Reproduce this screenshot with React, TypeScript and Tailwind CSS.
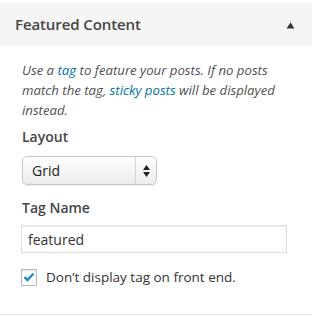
import React from "react";

export default function App() {
  return (
    <div
      className="w-[312px] h-[316px] bg-white overflow-hidden"
      style={{ fontFamily: '"Open Sans", "Liberation Sans", sans-serif' }}
    >
      <div className="h-[315px] border-b border-[#e1e1e1] pt-[3px]">
        {/* widget title bar */}
        <div className="h-[43px] bg-[#f5f5f5] flex items-center justify-between pl-[15px] pr-[17px]">
          <span className="text-[15px] font-semibold text-[#464646] tracking-[-0.1px]">
            Featured Content
          </span>
          <svg width="9" height="7" viewBox="0 0 9 7" className="mt-[1px]">
            <path d="M4.5 0.5 L8.5 6.5 L0.5 6.5 Z" fill="#333" />
          </svg>
        </div>

        <div className="px-[22px] pt-[14px]">
          <p className="text-[13.2px] italic leading-[20px] text-[#4f4f4f]">
            Use a <span className="text-[#0074a2]">tag</span> to feature your posts. If no posts
            match the tag, <span className="text-[#0074a2]">sticky posts</span> will be displayed
            instead.
          </p>

          <div className="mt-[7px] text-[14px] font-semibold leading-[20px] text-[#464646]">
            Layout
          </div>
          <div className="mt-[9px] w-[135px] h-[29px] rounded-[5px] border border-[#c8c8c8] bg-gradient-to-b from-white to-[#ebebeb] shadow-[0_1px_1px_rgba(0,0,0,0.08)] flex items-center">
            <span className="flex-1 pl-[9px] text-[14px] text-[#222]">Grid</span>
            <div className="w-[21px] h-full border-l border-[#d4d4d4] flex flex-col items-center justify-center gap-[2px]">
              <svg width="7" height="5" viewBox="0 0 7 5">
                <path d="M3.5 0 L7 5 L0 5 Z" fill="#222" />
              </svg>
              <svg width="7" height="5" viewBox="0 0 7 5">
                <path d="M0 0 L7 0 L3.5 5 Z" fill="#222" />
              </svg>
            </div>
          </div>

          <div className="mt-[13px] text-[14px] font-semibold leading-[20px] text-[#464646]">
            Tag Name
          </div>
          <div className="mt-[7px] -ml-[1px] w-[266px] h-[28px] border border-[#dddddd] shadow-[inset_0_1px_2px_rgba(0,0,0,0.07)] bg-white flex items-center pl-[6px] text-[14px] text-[#333]">
            featured
          </div>

          <div className="mt-[14px] -ml-[1px] flex items-center gap-[9px]">
            <div className="w-[16px] h-[17px] border border-[#bbb] bg-white shadow-[inset_0_1px_2px_rgba(0,0,0,0.1)] flex items-center justify-center">
              <svg width="12" height="10" viewBox="0 0 12 10">
                <path d="M1.5 5.2 L4.5 8 L10.5 1.5" fill="none" stroke="#1e8cbe" strokeWidth="2.4" />
              </svg>
            </div>
            <span className="text-[13.5px] text-[#333]">Don’t display tag on front end.</span>
          </div>
        </div>
      </div>
    </div>
  );
}
